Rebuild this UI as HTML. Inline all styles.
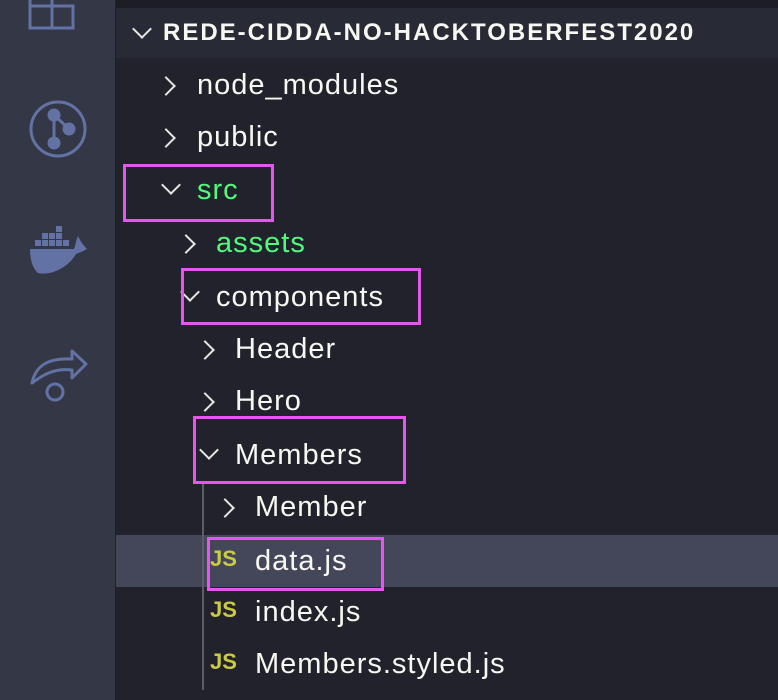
<!DOCTYPE html><html><head><style>
body{margin:0;width:778px;height:700px;overflow:hidden;background:#21222c;font-family:"Liberation Sans",sans-serif;position:relative}
.side{position:absolute;left:0;top:0;width:115px;height:700px;background:#343746;border-right:1px solid #1e1f28}
.top{position:absolute;left:116px;top:0;right:0;height:8px;background:#1c1d25}
.hdr{position:absolute;left:116px;top:8px;right:0;height:50px;background:#282a36;color:#f8f8f2;font-weight:bold;font-size:24px;letter-spacing:2px;line-height:50px}
.row{position:absolute;left:116px;right:0;height:52px;line-height:52px;color:#f8f8f2;font-size:29px;letter-spacing:1px}
.row span{position:absolute}
.chev{position:absolute;width:12px;height:12px;border-right:2px solid #e8e8e2;border-bottom:2px solid #e8e8e2}
.r{transform:rotate(-45deg)}.d{transform:rotate(45deg)}
.js{color:#cbcb41;font-weight:bold;font-size:22px;letter-spacing:0}
.box{position:absolute;border:3px solid #e556f0;box-sizing:border-box}
</style></head><body>
<div class="side">
<svg width="115" height="700" style="position:absolute;left:0;top:0" fill="none" stroke="#6272a4" stroke-width="3">
<path d="M30 -2V28H73V6H52V-2M52 6V28M30 6H52"/>
<circle cx="58" cy="129" r="27"/>
<path d="M54 115V143M54 115L69 129" />
<circle cx="54" cy="115" r="5" fill="#6272a4"/><circle cx="69" cy="129" r="5" fill="#6272a4"/><circle cx="54" cy="143" r="5" fill="#6272a4"/>
<g fill="#6272a4" stroke="none">
<rect x="35" y="240" width="6" height="6"/><rect x="42" y="240" width="6" height="6"/><rect x="49" y="240" width="6" height="6"/><rect x="56" y="240" width="6" height="6"/><rect x="63" y="240" width="6" height="6"/>
<rect x="42" y="233" width="6" height="6"/><rect x="49" y="233" width="6" height="6"/><rect x="56" y="233" width="6" height="6"/><rect x="56" y="226" width="6" height="6"/>
<path d="M30 249H74C76 244 76 240 78 236C80 240 82 244 87 249C82 252 78 253 76 254C68 268 50 276 38 273C32 268 30 258 30 249Z"/>
</g>
<path d="M32 383C36 364 50 358 72 359V351L86 364L72 378V370C55 368 44 374 32 383Z" stroke-linejoin="round"/>
<circle cx="55" cy="392" r="8"/>
</svg></div>
<div class="top"></div>
<div class="hdr"><div class="chev d" style="left:19px;top:14px"></div><span style="position:absolute;left:47px">REDE-CIDDA-NO-HACKTOBERFEST2020</span></div>
<div class="row" style="top:535px;background:#44475a"></div>
<div class="row" style="top:59px"><div class="chev r" style="left:43px;top:20px"></div><span style="left:81px">node_modules</span></div>
<div class="row" style="top:111px"><div class="chev r" style="left:43px;top:20px"></div><span style="left:81px">public</span></div>
<div class="row" style="top:164px"><div class="chev d" style="left:48px;top:14px"></div><span style="left:81px;color:#50fa7b">src</span></div>
<div class="row" style="top:217px"><div class="chev r" style="left:63px;top:20px"></div><span style="left:100px;color:#50fa7b">assets</span></div>
<div class="row" style="top:271px"><div class="chev d" style="left:67px;top:14px"></div><span style="left:100px">components</span></div>
<div class="row" style="top:323px"><div class="chev r" style="left:82px;top:20px"></div><span style="left:119px">Header</span></div>
<div class="row" style="top:375px"><div class="chev r" style="left:82px;top:20px"></div><span style="left:119px">Hero</span></div>
<div class="row" style="top:429px"><div class="chev d" style="left:86px;top:14px"></div><span style="left:119px">Members</span></div>
<div class="row" style="top:481px"><div class="chev r" style="left:102px;top:20px"></div><span style="left:139px">Member</span></div>
<div class="row" style="top:535px"><span class="js" style="left:94px;top:-2px">JS</span><span style="left:139px">data.js</span></div>
<div class="row" style="top:586px"><span class="js" style="left:94px;top:-2px">JS</span><span style="left:139px">index.js</span></div>
<div class="row" style="top:638px"><span class="js" style="left:94px;top:-2px">JS</span><span style="left:139px">Members.styled.js</span></div>
<div style="position:absolute;left:202px;top:483px;width:2px;height:207px;background:#5c5d66"></div>
<div class="box" style="left:123px;top:164px;width:151px;height:58px"></div>
<div class="box" style="left:181px;top:268px;width:240px;height:57px"></div>
<div class="box" style="left:193px;top:416px;width:213px;height:68px"></div>
<div class="box" style="left:207px;top:537px;width:177px;height:54px"></div>
</body></html>
